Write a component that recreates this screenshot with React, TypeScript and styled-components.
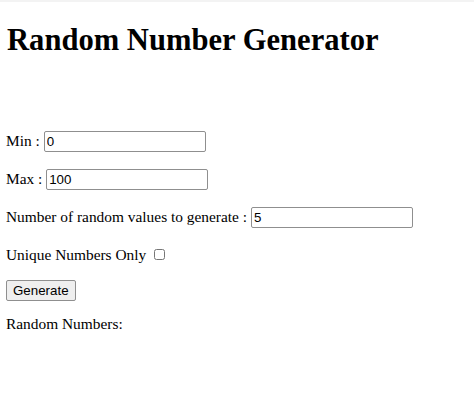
import React, { useState } from 'react';
import styled, { createGlobalStyle } from 'styled-components';

const GlobalStyle = createGlobalStyle`
    body {
        margin: 6px;
        background: #ffffff;
        color: #000000;
        font-family: 'Liberation Serif', 'Times New Roman', serif;
        font-size: 15.4px;
    }
`;

const TopEdge = styled.div`
    position: fixed;
    top: 0;
    left: 0;
    right: 0;
    height: 2px;
    background: #f3f3f3;
`;

const Title = styled.h1`
    font-size: 30.6px;
    font-weight: bold;
    margin: 17px 0 0 1px;
`;

const Spacer = styled.div`
    height: 73px;
`;

const Row = styled.p<{ $gap?: number }>`
    margin: ${({ $gap = 17 }) => $gap}px 0 0;
`;

const TextInput = styled.input`
    font-family: 'Liberation Sans', Arial, sans-serif;
    font-size: 13.33px;
    height: 21px;
    box-sizing: border-box;
    width: 162px;
    padding: 1px 2px;
    border: 1px solid #8f8f8f;
    border-radius: 2px;
    margin: 0;
    color: #000;
`;

const Check = styled.input`
    width: 11px;
    height: 11px;
    margin: 2.4px 3px 3px 4px;
`;

const Button = styled.button`
    font-family: 'Liberation Sans', Arial, sans-serif;
    font-size: 13.33px;
    height: 21px;
    padding: 0 6px;
    margin: 0;
    border: 1px solid #8f8f8f;
    border-radius: 2px;
    background: #efefef;
    color: #000;
`;

export default function App() {
    const [min, setMin] = useState('0');
    const [max, setMax] = useState('100');
    const [count, setCount] = useState('5');
    const [unique, setUnique] = useState(false);

    return (
        <>
            <GlobalStyle />
            <TopEdge />
            <Title>Random Number Generator</Title>
            <Spacer />
            <Row $gap={0}>
                Min : <TextInput value={min} onChange={(e) => setMin(e.target.value)} />
            </Row>
            <Row>
                Max : <TextInput value={max} onChange={(e) => setMax(e.target.value)} />
            </Row>
            <Row>
                Number of random values to generate :{' '}
                <TextInput value={count} onChange={(e) => setCount(e.target.value)} />
            </Row>
            <Row $gap={18}>
                Unique Numbers Only{' '}
                <Check type="checkbox" checked={unique} onChange={(e) => setUnique(e.target.checked)} />
            </Row>
            <Row $gap={16}>
                <Button>Generate</Button>
            </Row>
            <Row $gap={14}>Random Numbers:</Row>
        </>
    );
}
